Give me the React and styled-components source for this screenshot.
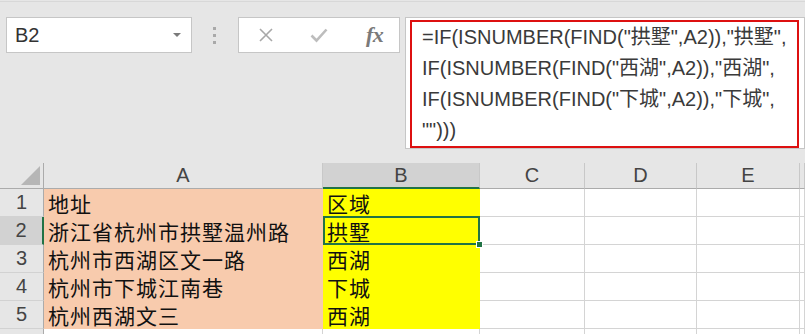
import styled, { createGlobalStyle } from 'styled-components';

const GlobalStyle = createGlobalStyle`
  html, body {
    margin: 0;
    padding: 0;
    background: #e6e6e6;
    overflow: hidden;
  }
`;

const formulaLines = [
  '=IF(ISNUMBER(FIND("拱墅",A2)),"拱墅",',
  'IF(ISNUMBER(FIND("西湖",A2)),"西湖",',
  'IF(ISNUMBER(FIND("下城",A2)),"下城",',
  '"")))',
];

const columns = ['A', 'B', 'C', 'D', 'E', ''];

const rows = [
  ['地址', '区域'],
  ['浙江省杭州市拱墅温州路', '拱墅'],
  ['杭州市西湖区文一路', '西湖'],
  ['杭州市下城江南巷', '下城'],
  ['杭州西湖文三', '西湖'],
  ['', ''],
];

const App = () => {
  return (
    <>
      <GlobalStyle />
      <Window>
        <TopRule />
        <FormulaBar>
          <NameBox>
            <span>B2</span>
            <DropArrow />
          </NameBox>
          <Grip>
            <i />
            <i />
            <i />
          </Grip>
          <ButtonGroup>
            <IconButton>
              <svg width='16' height='16' viewBox='0 0 16 16'>
                <path d='M2 2 L14 14 M14 2 L2 14' stroke='#a8a8a8' strokeWidth='1.6' fill='none' />
              </svg>
            </IconButton>
            <IconButton>
              <svg width='18' height='16' viewBox='0 0 18 16'>
                <path d='M1.5 8.5 L6.5 13.5 L16.5 2.5' stroke='#bdbdbd' strokeWidth='2.6' fill='none' />
              </svg>
            </IconButton>
            <IconButton>
              <Fx>fx</Fx>
            </IconButton>
          </ButtonGroup>
          <FormulaBox>
            <Highlight>
              {formulaLines.map((line, i) => (
                <FormulaLine key={i}>{line}</FormulaLine>
              ))}
            </Highlight>
          </FormulaBox>
        </FormulaBar>

        <Sheet>
          <CornerCell />
          {columns.map((col) => (
            <ColHeader key={col || 'F'} $selected={col === 'B'}>
              {col}
            </ColHeader>
          ))}
          {rows.map((row, r) => (
            <RowGroup key={r}>
              {/* last row is only a sliver at the bottom edge, its number is out of view */}
              <RowHeader $selected={r === 1}>{r < 5 ? r + 1 : ''}</RowHeader>
              <Cell $fill={r < 5 ? '#f8cbad' : null}>{row[0]}</Cell>
              <Cell $fill={r < 5 ? '#ffff00' : null} $active={r === 1}>
                {row[1]}
              </Cell>
              <Cell />
              <Cell />
              <Cell />
              <Cell />
            </RowGroup>
          ))}
        </Sheet>
      </Window>
    </>
  );
};

export default App;

const Window = styled.div`
  width: 805px;
  height: 334px;
  overflow: hidden;
  background: #e6e6e6;
  font-family: 'Liberation Sans', 'Noto Sans CJK SC', sans-serif;
`;

const TopRule = styled.div`
  height: 1px;
  margin-top: 1px;
  background: #d8d8d8;
`;

const FormulaBar = styled.div`
  display: flex;
  align-items: flex-start;
  padding: 15px 0 0 6px;
  height: 132px;
`;

const NameBox = styled.div`
  box-sizing: border-box;
  width: 187px;
  height: 36px;
  background: #fff;
  border: 1px solid #c6c6c6;
  display: flex;
  align-items: center;
  justify-content: space-between;
  padding: 0 10px 0 8px;
  font-size: 20px;
  color: #333;
`;

const DropArrow = styled.span`
  width: 0;
  height: 0;
  border-left: 4px solid transparent;
  border-right: 4px solid transparent;
  border-top: 4px solid #7a7a7a;
`;

const Grip = styled.div`
  width: 46px;
  height: 36px;
  display: flex;
  flex-direction: column;
  align-items: center;
  justify-content: center;
  gap: 4px;

  i {
    display: block;
    width: 3px;
    height: 3px;
    background: #a9a9a9;
  }
`;

const ButtonGroup = styled.div`
  box-sizing: border-box;
  width: 163px;
  height: 36px;
  background: #fff;
  border: 1px solid #c6c6c6;
  display: grid;
  grid-template-columns: repeat(3, 1fr);
  padding: 0 1px;
`;

const IconButton = styled.div`
  display: flex;
  align-items: center;
  justify-content: center;
`;

const Fx = styled.span`
  font-family: 'Liberation Serif', serif;
  font-style: italic;
  font-weight: bold;
  font-size: 22px;
  color: #7a7a7a;
  letter-spacing: -0.5px;
  margin-left: 6px;
`;

const FormulaBox = styled.div`
  box-sizing: border-box;
  margin-left: 5px;
  flex: 1;
  min-width: 400px;
  height: 132px;
  background: #fff;
  border: 1px solid #c6c6c6;
  padding: 2px 0 1px 4px;
`;

const Highlight = styled.div`
  box-sizing: border-box;
  width: 389px;
  height: 128px;
  border: 2px solid #dd1010;
  padding: 0 0 0 10px;
`;

const FormulaLine = styled.div`
  font-size: 20px;
  line-height: 31px;
  color: #3a3a3a;
  white-space: nowrap;
`;

const Sheet = styled.div`
  margin-top: 14px;
  display: grid;
  grid-template-columns: 44px 279px 157px 105px 112px 103px 1fr;
  grid-template-rows: 26px repeat(6, 28px);
`;

const RowGroup = styled.div`
  display: contents;
`;

const CornerCell = styled.div`
  position: relative;
  box-sizing: border-box;
  background: #e6e6e6;
  border-right: 1px solid #ababab;
  border-bottom: 1px solid #ababab;

  &::after {
    content: '';
    position: absolute;
    right: 3px;
    bottom: 3px;
    width: 0;
    height: 0;
    border-left: 19px solid transparent;
    border-bottom: 19px solid #b6b6b6;
  }
`;

const ColHeader = styled.div`
  box-sizing: border-box;
  background: ${(p) => (p.$selected ? '#d2d2d2' : '#e6e6e6')};
  border-right: 1px solid #c8c8c8;
  border-bottom: ${(p) => (p.$selected ? '2px solid #217346' : '1px solid #ababab')};
  display: flex;
  align-items: center;
  justify-content: center;
  padding-top: ${(p) => (p.$selected ? '1px' : '0')};
  font-size: 20px;
  color: #444;
`;

const RowHeader = styled.div`
  box-sizing: border-box;
  background: ${(p) => (p.$selected ? '#d2d2d2' : '#e6e6e6')};
  border-right: ${(p) => (p.$selected ? '2px solid #217346' : '1px solid #ababab')};
  border-bottom: 1px solid #d2d2d2;
  display: flex;
  align-items: center;
  justify-content: center;
  font-size: 20px;
  color: #444;
`;

const Cell = styled.div`
  position: relative;
  box-sizing: border-box;
  background: ${(p) => p.$fill || '#fff'};
  border-right: 1px solid ${(p) => p.$fill || '#d4d4d4'};
  border-bottom: 1px solid ${(p) => p.$fill || '#d4d4d4'};
  display: flex;
  align-items: center;
  padding-left: 4px;
  font-family: 'Noto Sans CJK SC', sans-serif;
  font-size: 21px;
  letter-spacing: 1px;
  color: #111;
  white-space: nowrap;
  z-index: ${(p) => (p.$active ? 2 : 0)};

  ${(p) =>
    p.$active &&
    `
    &::after {
      content: '';
      position: absolute;
      top: -1px;
      left: 0;
      right: -1px;
      bottom: -1px;
      border: 2px solid #217346;
    }
    &::before {
      content: '';
      position: absolute;
      right: -4px;
      bottom: -4px;
      width: 5px;
      height: 5px;
      background: #217346;
      border: 1px solid #fff;
      z-index: 3;
    }
  `}
`;
